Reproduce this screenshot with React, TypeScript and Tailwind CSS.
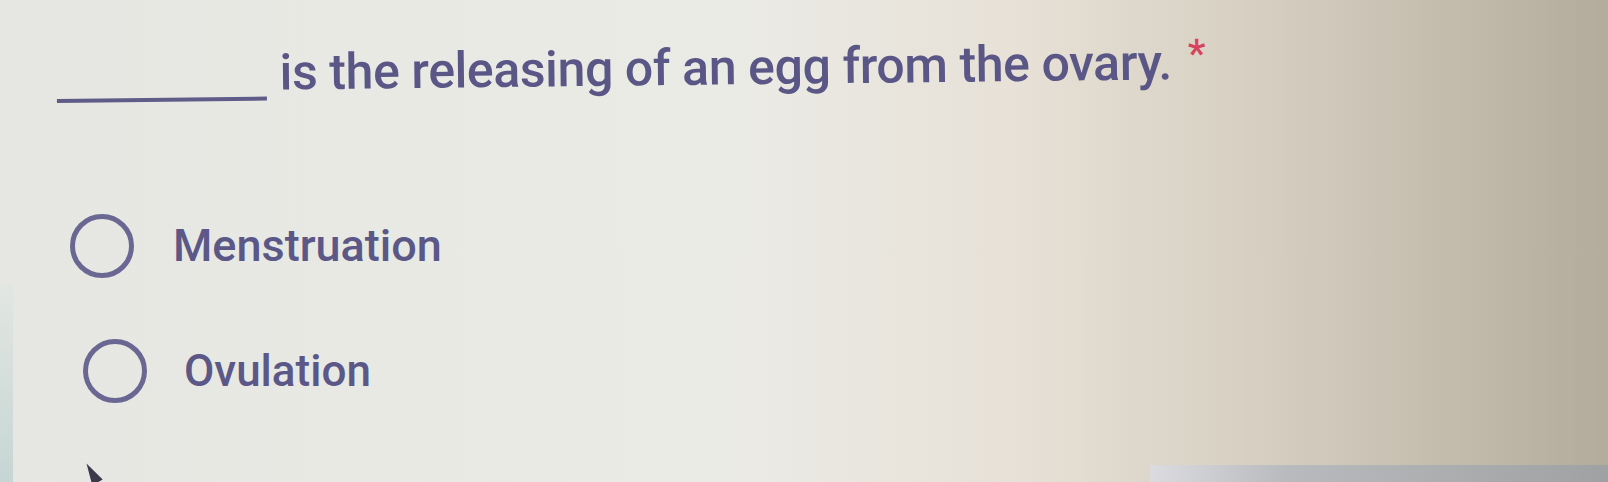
const font = { fontFamily: "Roboto, 'Liberation Sans', Arial, sans-serif" };

function Radio() {
    return <div className="w-[64px] h-[64px] rounded-full border-[5px] border-[#6a6892] shrink-0"></div>;
}

export default function App() {
    return (
        <div
            className="relative w-[1608px] h-[482px] overflow-hidden bg-[linear-gradient(90deg,#e6e7e2_0%,#ebebe6_45%,#e7e1d7_63%,#d4cdbf_80%,#b3ab9c_100%)]"
            style={font}
        >
            {/* left screen edge */}
            <div className="absolute left-0 top-[285px] w-[13px] h-[197px] bg-[linear-gradient(180deg,#e2e6e2,#c6d6d4)]"></div>
            {/* bottom bezel */}
            <div className="absolute left-[1150px] right-0 bottom-0 h-[17px] bg-[linear-gradient(90deg,#dcdce0,#b8babd_30%,#9fa1a2)]"></div>

            <div className="relative pl-[57px] pt-[45px]">
                {/* question title */}
                <div className="flex items-end origin-bottom-left rotate-[-0.65deg]">
                    <div className="w-[210px] h-[4px] bg-[#5f5d87] mb-[2px] mr-[13px] shrink-0"></div>
                    <h1 className="whitespace-nowrap text-[50px] leading-[60px] font-medium text-[#5a5786] tracking-[-0.4px]">
                        is the releasing of an egg from the ovary.
                        <span className="inline-block align-top leading-none mt-[2px] ml-[16px] text-[40px] text-[#d8435c]">*</span>
                    </h1>
                </div>

                {/* options */}
                <div className="mt-[109px] flex flex-col gap-[61px]">
                    <label className="flex items-center gap-[39px] ml-[13px]">
                        <Radio />
                        <span className="text-[45px] leading-[50px] font-medium text-[#5b5888]">Menstruation</span>
                    </label>
                    <label className="flex items-center gap-[37px] ml-[26px]">
                        <Radio />
                        <span className="text-[44px] leading-[50px] font-medium text-[#5b5888]">Ovulation</span>
                    </label>
                </div>
            </div>

            {/* pointer tip */}
            <div className="absolute left-[86px] top-[462px] w-0 h-0 border-l-[6px] border-l-transparent border-r-[6px] border-r-transparent border-b-[22px] border-b-[#3a3a4a] rotate-[-30deg]"></div>
        </div>
    );
}
